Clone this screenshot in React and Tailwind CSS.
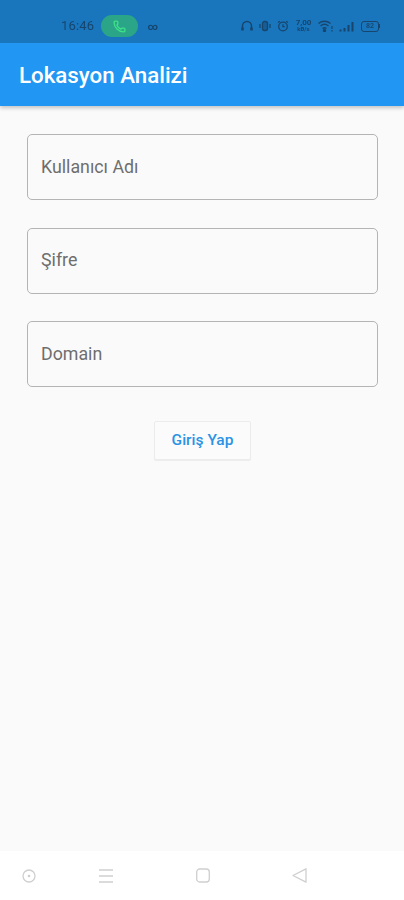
import { Phone } from 'lucide-react';

function StatusIcons() {
  return (
    <div className="flex items-center gap-[6px] text-[#17456d]">
      {/* headphones */}
      <svg width="12" height="12" viewBox="0 0 12 12" fill="none" stroke="currentColor" strokeWidth="1.500">
        <path d="M1.500 10V6a4.500 4.500 0 0 1 9 0v4" />
        <path d="M1.500 7.500V10.500M10.500 7.500V10.500" strokeWidth="2.400" />
      </svg>
      {/* vibrate */}
      <svg width="12" height="12" viewBox="0 0 12 12" fill="none" stroke="currentColor" strokeWidth="1.300">
        <rect x="3.500" y="1.500" width="5" height="9" rx="2" fill="currentColor" fillOpacity="0.5" />
        <path d="M1 4v4M11 4v4" />
      </svg>
      {/* alarm */}
      <svg width="12" height="12" viewBox="0 0 12 12" fill="none" stroke="currentColor" strokeWidth="1.300">
        <circle cx="6" cy="6.500" r="4.300" />
        <path d="M6 4.200v2.500h1.800M1 2.500l1.800-1.300M11 2.500L9.200 1.200" />
      </svg>
      {/* net speed */}
      <div className="flex flex-col items-center text-[8px] font-bold leading-[6.500px] w-[17px]">
        <span>7,00</span>
        <span className="text-[6px]">kB/s</span>
      </div>
      {/* wifi */}
      <svg width="15" height="12" viewBox="0 0 15 12" fill="none" stroke="currentColor" strokeWidth="1.400">
        <path d="M0.500 3.500c3.500-3 8.500-3 12 0M2.500 6c2.400-2 5.600-2 8 0M4.500 8.500c1.200-1 2.800-1 4 0" />
        <circle cx="6.500" cy="10.500" r="1" fill="currentColor" />
        <path d="M14 6v3M14 10v1.500" strokeWidth="1.200" />
      </svg>
      {/* signal */}
      <svg width="15" height="11" viewBox="0 0 15 11" fill="currentColor">
        <rect x="0.500" y="8.500" width="2" height="2" />
        <rect x="4.500" y="7" width="2" height="3.500" />
        <rect x="8.500" y="4" width="2" height="6.500" />
        <rect x="12.500" y="1" width="2" height="9.500" />
      </svg>
      {/* battery */}
      <div className="flex items-center ml-[1px]">
        <div className="w-[18px] h-[11px] rounded-[3px] border border-[#17456d] flex items-center justify-center text-[7px] leading-none font-semibold">
          82
        </div>
        <div className="w-[1px] h-[4px] bg-[#17456d]" />
      </div>
    </div>
  );
}

function Field({ label }) {
  return (
    <input
      placeholder={label}
      className="w-full h-[66px] px-[13px] pb-[2px] rounded-[5px] border border-[#b4b4b4] bg-transparent text-[17.800px] font-normal placeholder:text-[#6e6e6e] outline-none"
    />
  );
}

export default function App() {
  return (
    <div className="min-h-[900px] h-[900px] flex flex-col bg-[#fafafa] font-['Roboto',sans-serif]">
      <div className="h-[43px] shrink-0 bg-[#1976bd] flex items-center pl-[61px] pr-[24px] pt-[9px] blur-[0.400px]">
        <span className="text-[13px] text-[#17456d] tracking-[0.200px]">16:46</span>
        <div className="ml-[7px] w-[37px] h-[22px] rounded-full bg-[#2ba587] flex items-center justify-center">
          <Phone size={13} stroke="#3ee08a" strokeWidth={2.500} />
        </div>
        <span className="ml-[9px] text-[10px] font-bold text-[#17456d]">{'\u221E'}</span>
        <div className="ml-auto">
          <StatusIcons />
        </div>
      </div>

      <header className="h-[63px] shrink-0 bg-[#2196f3] flex items-center px-[19px] pt-[3px] shadow-[0_2px_4px_rgba(0,0,0,0.22)]">
        <h1 className="text-[22.300px] font-medium text-white">Lokasyon Analizi</h1>
      </header>

      <main className="flex-1 flex flex-col items-center pl-[27px] pr-[26px] pt-[28px]">
        <div className="w-full flex flex-col gap-[27.500px]">
          <Field label="Kullanıcı Adı" />
          <Field label="Şifre" />
          <Field label="Domain" />
        </div>
        <button className="mt-[34px] w-[97px] h-[39px] rounded-[2px] border border-[#ececec] bg-[#fbfbfb] text-[15.500px] font-medium text-[#2b93e6] shadow-[0_1px_1px_rgba(0,0,0,0.06)]">
          Giriş Yap
        </button>
      </main>

      <nav className="h-[49px] shrink-0 bg-white flex items-center pl-[22px] text-[#cfcfcf]">
        <svg width="14" height="14" viewBox="0 0 14 14" fill="none" stroke="currentColor" strokeWidth="1.300">
          <circle cx="7" cy="7" r="6" />
          <circle cx="7" cy="7" r="1.300" fill="currentColor" stroke="none" />
        </svg>
        <svg className="ml-[63px]" width="14" height="14" viewBox="0 0 14 14" fill="none" stroke="currentColor" strokeWidth="1.300">
          <path d="M0 1h14M0 7h14M0 13h14" />
        </svg>
        <svg className="ml-[83px]" width="14" height="15" viewBox="0 0 14 15" fill="none" stroke="currentColor" strokeWidth="1.300">
          <rect x="0.700" y="1" width="12.600" height="13" rx="3" />
        </svg>
        <svg className="ml-[82px]" width="15" height="15" viewBox="0 0 15 15" fill="none" stroke="currentColor" strokeWidth="1.300" strokeLinejoin="round">
          <path d="M1 7.500L14 0.800V14.200Z" />
        </svg>
      </nav>
    </div>
  );
}
